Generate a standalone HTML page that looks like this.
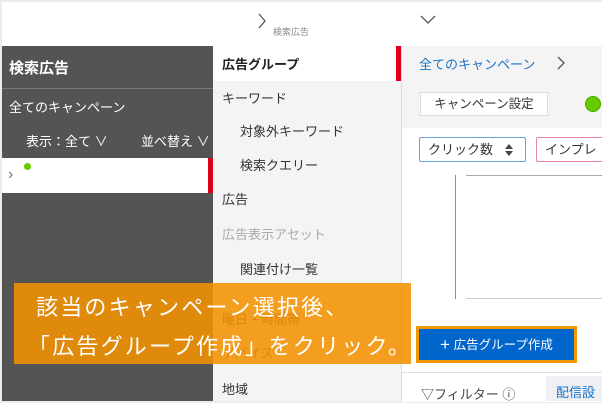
<html><head><style>
body{margin:0;width:602px;height:401px;overflow:hidden;background:#ececec;font-family:"Liberation Sans","Noto Sans CJK JP",sans-serif;position:relative}
.a{position:absolute;white-space:nowrap}
</style></head><body>
<div class="a" style="left:2px;top:2px;width:600px;height:44px;background:#fff"></div>
<svg class="a" style="left:257px;top:13px" width="10" height="16"><path d="M2 1 L8 8 L2 15" fill="none" stroke="#555" stroke-width="1.3"/></svg>
<div class="a" style="left:273px;top:25px;font-size:9px;color:#888">検索広告</div>
<svg class="a" style="left:420px;top:14px" width="16" height="10"><path d="M1 2 L8 9 L15 2" fill="none" stroke="#555" stroke-width="1.3"/></svg>

<div class="a" style="left:2px;top:46px;width:211px;height:355px;background:#545454"></div>
<div class="a" style="left:9px;top:57px;font-size:15px;font-weight:bold;color:#fff">検索広告</div>
<div class="a" style="left:2px;top:88px;width:211px;height:1px;background:#777"></div>
<div class="a" style="left:9px;top:97px;font-size:13px;color:#fff">全てのキャンペーン</div>
<div class="a" style="left:26px;top:131px;font-size:13px;color:#fff">表示：全て ∨</div>
<div class="a" style="left:141px;top:131px;font-size:13px;color:#fff">並べ替え ∨</div>
<div class="a" style="left:2px;top:158px;width:206px;height:35px;background:#fff"></div>
<div class="a" style="left:208px;top:158px;width:5px;height:35px;background:#e0001b"></div>
<div class="a" style="left:8px;top:166px;font-size:16px;color:#777">&#x203A;</div>
<div class="a" style="left:24px;top:163px;width:7px;height:7px;border-radius:50%;background:#6c0"></div>

<div class="a" style="left:213px;top:46px;width:188px;height:355px;background:#f4f4f4"></div>
<div class="a" style="left:213px;top:46px;width:183px;height:35px;background:#fff"></div>
<div class="a" style="left:396px;top:46px;width:5px;height:35px;background:#e0001b"></div>
<div class="a" style="left:222px;top:54px;font-size:13px;font-weight:bold;color:#222">広告グループ</div>
<div class="a" style="left:222px;top:88px;font-size:13px;color:#333">キーワード</div>
<div class="a" style="left:240px;top:121px;font-size:13px;color:#333">対象外キーワード</div>
<div class="a" style="left:240px;top:155px;font-size:13px;color:#333">検索クエリー</div>
<div class="a" style="left:222px;top:189px;font-size:13px;color:#333">広告</div>
<div class="a" style="left:222px;top:224px;font-size:13px;color:#aaa">広告表示アセット</div>
<div class="a" style="left:240px;top:259px;font-size:13px;color:#333">関連付け一覧</div>
<div class="a" style="left:222px;top:309px;font-size:13px;color:#333">曜日・時間帯</div>
<div class="a" style="left:222px;top:343px;font-size:13px;color:#333">デバイス</div>
<div class="a" style="left:222px;top:379px;font-size:13px;color:#333">地域</div>

<div class="a" style="left:401px;top:46px;width:1px;height:355px;background:#ddd"></div>
<div class="a" style="left:402px;top:46px;width:200px;height:82px;background:#f4f4f4"></div>
<div class="a" style="left:402px;top:128px;width:200px;height:244px;background:#fff"></div>
<div class="a" style="left:419px;top:54px;font-size:13px;color:#1a73c8">全てのキャンペーン</div>
<svg class="a" style="left:556px;top:56px" width="10" height="14"><path d="M2 1 L8 7 L2 13" fill="none" stroke="#555" stroke-width="1.3"/></svg>
<div class="a" style="left:420px;top:92px;width:128px;height:24px;background:#fff;border:1px solid #ddd;box-sizing:border-box;font-size:12.5px;color:#333;line-height:22px;text-align:center">キャンペーン設定</div>
<div class="a" style="left:585px;top:96px;width:16px;height:16px;border-radius:50%;background:#6c0;border:1px solid #4a0;box-sizing:border-box"></div>
<div class="a" style="left:419px;top:137px;width:107px;height:25px;border:1px solid #6aa2dc;border-radius:2px;box-sizing:border-box;font-size:13px;color:#333;line-height:23px;padding-left:8px;background:#fff">クリック数</div>
<svg class="a" style="left:504px;top:143px" width="10" height="14"><path d="M5 1 L9 6 L1 6Z M5 13 L9 8 L1 8Z" fill="#444"/></svg>
<div class="a" style="left:536px;top:137px;width:70px;height:25px;border:1px solid #e8899a;border-radius:2px;box-sizing:border-box;font-size:13px;color:#333;line-height:23px;padding-left:8px">インプレ</div>
<div class="a" style="left:455px;top:175px;width:1px;height:124px;background:#5b9bd5"></div>
<div class="a" style="left:466px;top:175px;width:136px;height:1px;background:#aaa"></div>
<div class="a" style="left:466px;top:298px;width:136px;height:1px;background:#ccc"></div>
<div class="a" style="left:402px;top:372px;width:200px;height:29px;background:#fff;border-top:1px solid #ddd"></div>
<div class="a" style="left:421px;top:384px;font-size:13px;color:#444">▽フィルター ⓘ</div>
<div class="a" style="left:546px;top:376px;width:56px;height:25px;background:#eef0f4"></div>
<div class="a" style="left:556px;top:382px;font-size:13px;color:#1a73c8">配信設</div>

<div class="a" style="left:416px;top:326px;width:161px;height:37px;background:#f39800;"></div>
<div class="a" style="left:419px;top:329px;width:155px;height:31px;background:#0066cc;color:#fff;font-size:12.5px;line-height:31px;text-align:center"><span style="font-size:17px;vertical-align:-1px">+</span> 広告グループ作成</div>

<div class="a" style="left:14px;top:283px;width:397px;height:81px;background:rgba(243,146,0,0.88)"></div>
<div class="a" style="left:36px;top:290px;font-size:22px;color:#fff;letter-spacing:2.2px">該当のキャンペーン選択後、</div>
<div class="a" style="left:28px;top:329px;font-size:22px;color:#fff;letter-spacing:2.2px">「広告グループ作成」をクリック。</div>
</body></html>
